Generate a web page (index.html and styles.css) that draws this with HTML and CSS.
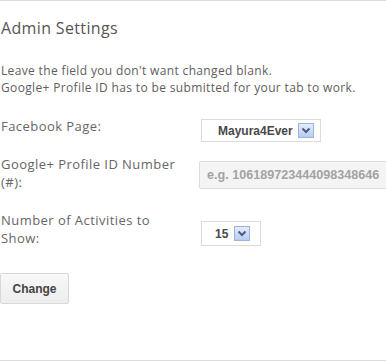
FILE: index.html
```html
<!DOCTYPE html>
<html>
<head>
<meta charset="utf-8">
<link rel="stylesheet" href="styles.css">
</head>
<body>
<div class="page">
  <h1 class="title">Admin Settings</h1>
  <p class="intro">Leave the field you don't want changed blank.<br>Google+ Profile ID has to be submitted for your tab to work.</p>
  <div class="form">
    <div class="label">Facebook Page:</div>
    <div class="ctrl ctrl-fb">
      <div class="select select-wide"><span class="sel-text">Mayura4Ever</span>
        <svg class="arrow" width="16" height="15" viewBox="0 0 16 15"><defs><linearGradient id="g1" x1="0" y1="0" x2="0" y2="1"><stop offset="0" stop-color="#e6eefb"/><stop offset="1" stop-color="#b7cbef"/></linearGradient></defs><rect x="0.5" y="0.5" width="15" height="14" fill="url(#g1)" stroke="#9bb3de"/><path d="M4.5 5.5 L8 9 L11.5 5.5" fill="none" stroke="#4a5c80" stroke-width="2"/></svg>
      </div>
    </div>
    <div class="label">Google+ Profile ID Number (#):</div>
    <div class="ctrl ctrl-gp">
      <input class="text-input" type="text" placeholder="e.g. 106189723444098348646">
    </div>
    <div class="label">Number of Activities to Show:</div>
    <div class="ctrl ctrl-num">
      <div class="select select-narrow"><span class="sel-text">15</span>
        <svg class="arrow" width="16" height="15" viewBox="0 0 16 15"><defs><linearGradient id="g2" x1="0" y1="0" x2="0" y2="1"><stop offset="0" stop-color="#e6eefb"/><stop offset="1" stop-color="#b7cbef"/></linearGradient></defs><rect x="0.5" y="0.5" width="15" height="14" fill="url(#g2)" stroke="#9bb3de"/><path d="M4.5 5.5 L8 9 L11.5 5.5" fill="none" stroke="#4a5c80" stroke-width="2"/></svg>
      </div>
    </div>
  </div>
  <button class="btn" type="button">Change</button>
</div>
</body>
</html>
```

FILE: styles.css
```css
html, body {
  margin: 0;
  padding: 0;
  background: #fff;
}
.page {
  box-sizing: border-box;
  width: 386px;
  height: 361px;
  border-top: 1px solid #dcdcdc;
  border-bottom: 1px solid #dcdcdc;
  padding: 16px 0 0 1px;
  font-family: "Open Sans", sans-serif;
  color: #555;
  overflow: hidden;
}
.title {
  margin: 0;
  font-size: 16px;
  font-weight: normal;
  letter-spacing: 0.35px;
  line-height: 22px;
  color: #555;
}
.intro {
  margin: 23px 0 0 0;
  font-size: 12px;
  letter-spacing: 0.35px;
  line-height: 17px;
  color: #5e5e5e;
}
.form {
  display: grid;
  grid-template-columns: 198px 1fr;
  grid-template-rows: 38px 56px auto;
  margin-top: 21px;
  align-items: start;
}
.label {
  font-size: 13px;
  letter-spacing: 0.45px;
  line-height: 18px;
  color: #666;
  width: 185px;
}
.ctrl-fb { margin-top: 2px; padding-left: 2px; }
.ctrl-gp { margin-top: 6px; }
.ctrl-num { margin-top: 10px; padding-left: 2px; }
.select {
  box-sizing: border-box;
  display: flex;
  align-items: center;
  justify-content: flex-start;
  gap: 5px;
  border: 1px solid #dcdcdc;
  background: #fff;
  font-family: "Liberation Sans", Arial, sans-serif;
  font-weight: bold;
  font-size: 12px;
  color: #484848;
}
.select-wide { width: 120px; height: 23px; padding-left: 16px; }
.select-narrow { width: 60px; height: 25px; padding-left: 13px; gap: 6px; }
.arrow { display: block; flex: none; }
.text-input {
  box-sizing: border-box;
  width: 190px;
  height: 28px;
  margin: 0;
  border: 1px solid #dcdcdc;
  border-radius: 2px;
  background: #f4f4f4;
  padding: 0 0 0 7px;
  font-family: "Liberation Sans", Arial, sans-serif;
  font-weight: bold;
  font-size: 12.6px;
  color: #999;
  outline: none;
}
.text-input::placeholder {
  color: #a3a3a3;
  opacity: 1;
}
.btn {
  display: block;
  box-sizing: border-box;
  margin: 26px 0 0 -1px;
  width: 69px;
  height: 31px;
  border: 1px solid #d8d8d8;
  border-radius: 2px;
  background: linear-gradient(#f8f8f8, #ededed);
  font-family: "Liberation Sans", Arial, sans-serif;
  font-weight: bold;
  font-size: 12px;
  color: #444;
  padding: 0;
}
```
